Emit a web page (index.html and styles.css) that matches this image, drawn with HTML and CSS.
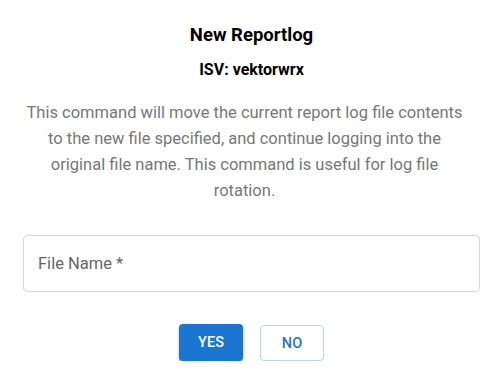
FILE: index.html
```html
<!DOCTYPE html>
<html lang="en">
<head>
  <meta charset="UTF-8" />
  <title>New Reportlog</title>
  <link rel="stylesheet" href="styles.css">
</head>
<body>

  <div class="dialog">
    <h1>New Reportlog</h1>
    <h2>ISV: vektorwrx</h2>

    <p class="desc">
      This command will move the current report log file contents to the new file specified, and continue logging into the original file name. This command is useful for log file rotation.
    </p>

    <div class="field">
      <span class="label">File Name *</span>
    </div>

    <div class="actions">
      <button class="btn yes">Yes</button>
      <button class="btn no">No</button>
    </div>
  </div>

</body>
</html>
```

FILE: styles.css
```css
body {
  margin: 0;
  font-family: Roboto, 'Liberation Sans', sans-serif;
  background-color: #fff;
  color: #000;
}

.dialog {
  padding: 24px 20px 0 23px;
  text-align: center;
}

h1 {
  font-size: 18.5px;
  font-weight: 700;
  margin: 0;
  line-height: 22px;
}

h2 {
  font-size: 16px;
  font-weight: 700;
  margin: 14px 0 0;
  line-height: 20px;
}

.desc {
  font-size: 16.5px;
  line-height: 26px;
  color: #777;
  margin: 20px 0 0;
  padding: 0 14px 0 0;
}

.field {
  margin-top: 31px;
  height: 55px;
  border: 1px solid #d6d6d6;
  border-radius: 4px;
  display: flex;
  align-items: center;
  padding-left: 14px;
  text-align: left;
}

.label {
  font-size: 16.5px;
  color: #666;
}

.actions {
  display: flex;
  justify-content: center;
  gap: 17px;
  margin-top: 32px;
}

.btn {
  width: 64px;
  height: 37px;
  font-family: inherit;
  font-size: 14.5px;
  font-weight: 500;
  text-transform: uppercase;
  border-radius: 4px;
  cursor: pointer;
}

.yes {
  background-color: #1976d2;
  color: #fff;
  border: none;
  box-shadow: 0 2px 3px rgba(0,0,0,0.3);
}

.no {
  background-color: #fff;
  color: #1976d2;
  border: 1px solid #b7d5f3;
  height: 36px;
  margin-top: 1px;
}
```
